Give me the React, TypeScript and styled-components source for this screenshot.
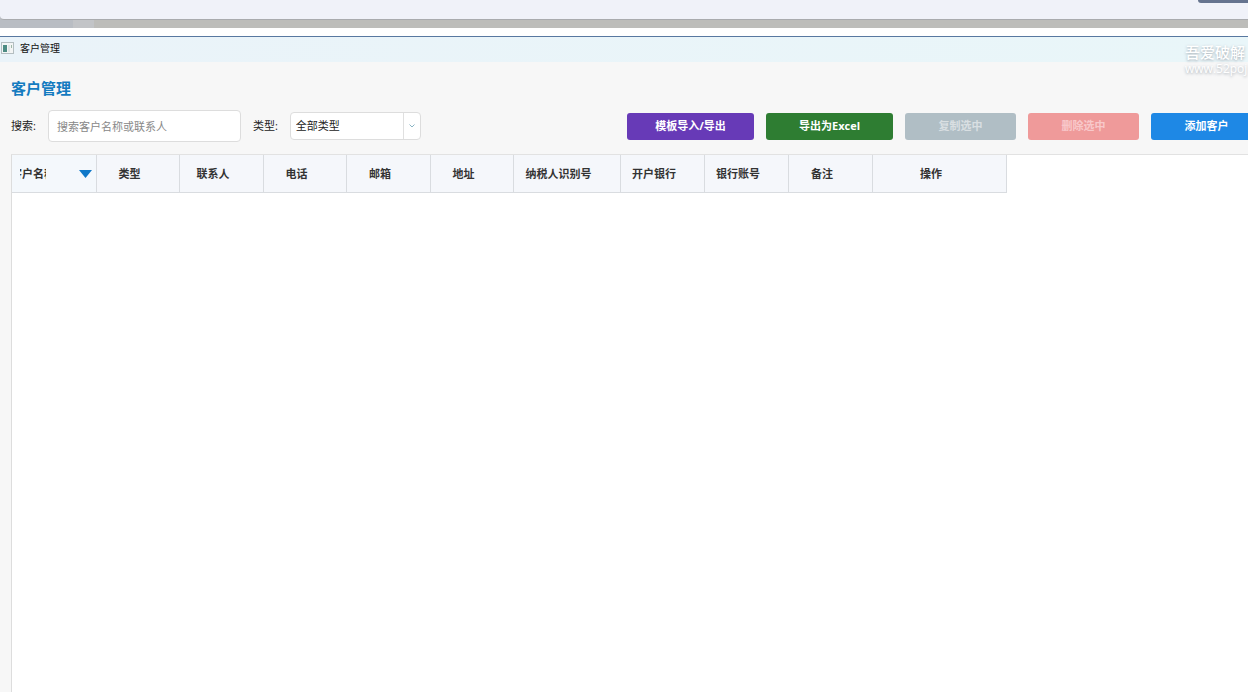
import React from "react";
import styled, { createGlobalStyle } from "styled-components";

const GlobalStyle = createGlobalStyle`
  * { box-sizing: border-box; }
  html, body, #root { height: 100%; }
  body {
    margin: 0;
    overflow: hidden;
    background: #ffffff;
    color: #222222;
    font: 11px/16px "Open Sans", "Noto Sans CJK SC", sans-serif;
  }
`;

const Screen = styled.div`
  position: relative;
  display: flex;
  flex-direction: column;
  height: 100%;
  overflow: hidden;
`;

const Backdrop = styled.div`
  flex: none;
  height: 28px;
  background: linear-gradient(90deg, #b9bdc3 0 73px, #c2c4c7 73px 94px, #bdbdba 94px);
`;

const BackPanel = styled.div`
  display: flex;
  justify-content: flex-end;
  height: 20px;
  background: #f0f2f9;
  border-bottom: 1px solid #a9abae;
  border-bottom-left-radius: 4px;
`;

const BackTab = styled.div`
  width: 50px;
  height: 3px;
  background: #66748f;
  border-bottom-left-radius: 5px;
`;

const Window = styled.main`
  display: flex;
  flex: 1;
  flex-direction: column;
  margin-top: 8px;
  border-top: 1px solid #5878a0;
  background: #f7f7f7;
`;

const TitleBar = styled.header`
  display: flex;
  align-items: center;
  gap: 6px;
  height: 25px;
  padding-bottom: 3px;
  background: linear-gradient(90deg, #eaf3f9, #e9f6f9);
  color: #111111;
  font-size: 10px;
`;

const Content = styled.section`
  display: flex;
  flex: 1;
  flex-direction: column;
  width: calc(100% + 26px);
  padding: 14px 12px 0 11px;
`;

const Heading = styled.h1`
  margin: 0;
  color: #147bc0;
  font-size: 15px;
  line-height: 24px;
`;

const Toolbar = styled.div`
  display: flex;
  align-items: center;
  gap: 12px;
  height: 32px;
  margin: 10px 0 12px;
`;

const SearchBox = styled.input`
  width: 193px;
  height: 32px;
  padding: 0 8px;
  border: 1px solid #dddddd;
  border-radius: 4px;
  background: #ffffff;
  font: inherit;
  &::placeholder { color: #888888; opacity: 1; }
`;

const SelectWrap = styled.div`
  position: relative;
  width: 131px;
  height: 28px;
`;

const TypeSelect = styled.select`
  appearance: none;
  width: 100%;
  height: 100%;
  padding: 0 24px 0 5px;
  border: 1px solid #dddddd;
  border-radius: 4px;
  background: #ffffff;
  color: #222222;
  font: inherit;
`;

const SelectArrow = styled.span`
  position: absolute;
  top: 1px;
  right: 1px;
  bottom: 1px;
  display: flex;
  align-items: center;
  justify-content: center;
  width: 17px;
  border-left: 1px solid #e0e0e0;
  pointer-events: none;
`;

const Actions = styled.div`
  display: flex;
  gap: 12px;
  margin-left: auto;
`;

const ActionButton = styled.button<{ $bg: string; $fg?: string; $wide?: boolean }>`
  width: ${(p) => (p.$wide ? 127 : 111)}px;
  height: 27px;
  padding: 0;
  border: 0;
  border-radius: 3px;
  background: ${(p) => p.$bg};
  color: ${(p) => p.$fg ?? "#ffffff"};
  font: inherit;
  font-weight: 700;
`;

const TableArea = styled.div`
  flex: 1;
  border-top: 1px solid #e2e2e2;
  border-left: 1px solid #dddddd;
  background: #ffffff;
`;

const Table = styled.table`
  border-collapse: separate;
  border-spacing: 0;
  table-layout: fixed;
  width: 995px;
`;

const HeadCell = styled.th<{ $width: number }>`
  width: ${(p) => p.$width}px;
  height: 38px;
  padding: 0 17px 0 0;
  border-right: 1px solid #d9dce0;
  border-bottom: 1px solid #d9dce0;
  background: #f5f7fb;
  color: #333333;
  font-weight: 700;
  text-align: center;
  white-space: nowrap;
`;

const SortedCell = styled(HeadCell)`
  padding: 0 4px 0 8px;
  background: #f4f8fc;
`;

const SortLabel = styled.div`
  display: flex;
  align-items: center;
  justify-content: space-between;
`;

const ClippedText = styled.span`
  display: flex;
  justify-content: center;
  width: 26px;
  overflow: hidden;
`;

const Watermark = styled.div`
  position: absolute;
  top: 40px;
  left: calc(100% - 63px);
  color: #ffffff;
  font-size: 15px;
  font-weight: 500;
  line-height: 24px;
  white-space: nowrap;
  text-shadow: 0 1px 3px #a0a8b0;
  pointer-events: none;
`;

const WatermarkUrl = styled.div`
  font-size: 12px;
  line-height: 10px;
`;

const columns = [
  { label: "类型", width: 83 },
  { label: "联系人", width: 84 },
  { label: "电话", width: 83 },
  { label: "邮箱", width: 84 },
  { label: "地址", width: 83 },
  { label: "纳税人识别号", width: 107 },
  { label: "开户银行", width: 84 },
  { label: "银行账号", width: 84 },
  { label: "备注", width: 84 },
  { label: "操作", width: 134 },
];

const WindowIcon = () => (
  <svg width="14" height="12" viewBox="0 0 14 12" aria-hidden="true">
    <rect x="1.5" y="0.5" width="12" height="11" fill="#f3f5f5" stroke="#b4bec1" />
    <rect x="3" y="3" width="4" height="7" fill="#4d8b83" />
    <rect x="8" y="3" width="2" height="7" fill="#dfe5e5" />
    <rect x="11" y="3" width="1" height="3" fill="#9fb8a8" />
  </svg>
);

export default function App() {
  return (
    <Screen>
      <GlobalStyle />
      <Backdrop>
        <BackPanel>
          <BackTab />
        </BackPanel>
      </Backdrop>
      <Window>
        <TitleBar>
          <WindowIcon />
          <span>客户管理</span>
        </TitleBar>
        <Content>
          <Heading>客户管理</Heading>
          <Toolbar>
            <label htmlFor="search">搜索:</label>
            <SearchBox id="search" type="text" placeholder="搜索客户名称或联系人" />
            <label htmlFor="type">类型:</label>
            <SelectWrap>
              <TypeSelect id="type">
                <option>全部类型</option>
              </TypeSelect>
              <SelectArrow>
                <svg width="6" height="4" viewBox="0 0 6 4" aria-hidden="true">
                  <path d="M0.5 0.5 3 3 5.5 0.5" fill="none" stroke="#8ab4c4" />
                </svg>
              </SelectArrow>
            </SelectWrap>
            <Actions>
              <ActionButton $bg="#673ab7" $wide>模板导入/导出</ActionButton>
              <ActionButton $bg="#2e7d32" $wide>导出为Excel</ActionButton>
              <ActionButton $bg="#b0bec5" $fg="#d9dfe2" disabled>复制选中</ActionButton>
              <ActionButton $bg="#ef9a9a" $fg="#f8c8ca" disabled>删除选中</ActionButton>
              <ActionButton $bg="#1e88e5">添加客户</ActionButton>
            </Actions>
          </Toolbar>
          <TableArea>
            <Table>
              <thead>
                <tr>
                  <SortedCell $width={85} aria-sort="descending">
                    <SortLabel>
                      <ClippedText>客户名称</ClippedText>
                      <svg width="13" height="8" viewBox="0 0 13 8" aria-hidden="true">
                        <path d="M0 0H13L6.5 8Z" fill="#0f78c8" />
                      </svg>
                    </SortLabel>
                  </SortedCell>
                  {columns.map((c) => (
                    <HeadCell key={c.label} $width={c.width}>{c.label}</HeadCell>
                  ))}
                </tr>
              </thead>
            </Table>
          </TableArea>
        </Content>
      </Window>
      <Watermark>
        吾爱破解
        <WatermarkUrl>www.52poj</WatermarkUrl>
      </Watermark>
    </Screen>
  );
}
